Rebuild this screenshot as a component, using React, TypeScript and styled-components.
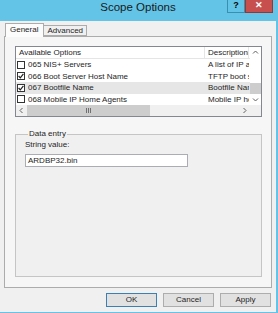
import styled, { createGlobalStyle } from "styled-components";

const GlobalStyle = createGlobalStyle`
  html, body {
    margin: 0;
    padding: 0;
    background: #f0f0f0;
  }
  body {
    font-family: "Liberation Sans", Arial, sans-serif;
    font-size: 8px;
    color: #1e1e1e;
  }
`

const Window = styled.div`
  width: 278px;
  height: 313px;
  box-sizing: border-box;
  display: flex;
  flex-direction: column;
  background: #f0f0f0;
  border-right: 2px solid #63c4e8;
  border-bottom: 1px solid #63c4e8;
  overflow: hidden;
`

const TitleBar = styled.div`
  height: 21px;
  flex: none;
  display: grid;
  grid-template-columns: 49px 1fr 49px;
  align-items: start;
  background: #63c4e8;
`

const Title = styled.div`
  grid-column: 2;
  text-align: center;
  font-size: 11.5px;
  line-height: 14px;
  color: #1a1a1a;
`

const Caption = styled.div`
  grid-column: 3;
  display: flex;
`

const CaptionButton = styled.div<{ close?: boolean }>`
  width: ${p => (p.close ? 28 : 18)}px;
  height: 13px;
  box-sizing: border-box;
  border: 1px solid ${p => (p.close ? '#8e3a3a' : '#3a8fb0')};
  border-top: none;
  background: ${p => (p.close ? '#c7504f' : '#63c4e8')};
  color: ${p => (p.close ? '#fff' : '#000')};
  font-weight: bold;
  font-size: 9px;
  line-height: 11px;
  text-align: center;
`

const Body = styled.div`
  flex: 1;
  display: flex;
  flex-direction: column;
  padding: 1px 4px 0 4px;
`

const TabStrip = styled.div`
  display: flex;
  align-items: flex-end;
  height: 14px;
  padding-left: 1px;
  position: relative;
  z-index: 1;
`

const Tab = styled.div<{ active?: boolean }>`
  box-sizing: border-box;
  height: ${p => (p.active ? 14 : 11)}px;
  padding: ${p => (p.active ? '1px 5px 0 4px' : '0 3px 0 3px')};
  margin-bottom: ${p => (p.active ? -1 : 0)}px;
  border: 1px solid #acacac;
  border-bottom: ${p => (p.active ? 'none' : '1px solid #acacac')};
  border-left: ${p => (p.active ? '1px solid #acacac' : 'none')};
  background: ${p => (p.active ? '#fcfcfc' : '#f0f0f0')};
  line-height: 10px;
`

const TabPanel = styled.div`
  box-sizing: border-box;
  height: 252px;
  border: 1px solid #acacac;
  background: #f6f6f6;
  padding: 9px 9px 0 10px;
  display: flex;
  flex-direction: column;
`

const ListView = styled.div`
  width: 247px;
  height: 71px;
  box-sizing: border-box;
  border: 1px solid #828790;
  background: #fff;
  display: grid;
  grid-template-columns: 1fr 11px;
  grid-template-rows: 58px 11px;
`

const ListBody = styled.div`
  overflow: hidden;
`

const HeaderRow = styled.div`
  display: grid;
  grid-template-columns: 189px 44px;
  height: 12px;
  border-bottom: 1px solid #e5e5e5;
  box-sizing: border-box;
`

const HeaderCell = styled.div`
  padding-left: 3px;
  line-height: 11px;
  white-space: nowrap;
  overflow: hidden;
  border-right: 1px solid #e5e5e5;
`

const Row = styled.div<{ selected?: boolean }>`
  display: grid;
  grid-template-columns: 189px 44px;
  height: 11.5px;
  align-items: center;
  background: ${p => (p.selected ? '#e6e6e6' : 'transparent')};
`

const NameCell = styled.div`
  display: flex;
  align-items: center;
  gap: 3px;
  padding-left: 1px;
  white-space: nowrap;
`

const DescCell = styled.div`
  padding-left: 3px;
  white-space: nowrap;
  overflow: hidden;
`

const Check = styled.span`
  width: 8px;
  height: 8px;
  box-sizing: border-box;
  border: 1px solid #333;
  background: #fff;
  display: inline-flex;
  align-items: center;
  justify-content: center;
`

const VScroll = styled.div`
  grid-row: 1;
  grid-column: 2;
  display: grid;
  grid-template-rows: 11px 12px 12px 12px 11px;
  background: #fff;
`

const Arrow = styled.div<{ row?: number }>`
  display: flex;
  align-items: center;
  justify-content: center;
  ${p => (p.row ? `grid-row: ${p.row};` : '')}
`

const VThumb = styled.div`
  grid-row: 4;
  background: #cdcdcd;
  margin-top: 1px;
`

const HScroll = styled.div`
  grid-row: 2;
  grid-column: 1;
  display: grid;
  grid-template-columns: 11px 123px 1fr 11px;
  background: #f0f0f0;
`

const HThumb = styled.div`
  background: #cdcdcd;
  display: flex;
  align-items: center;
  justify-content: center;
  gap: 1px;
`

const Grip = styled.span`
  width: 1px;
  height: 5px;
  background: #707070;
`

const Corner = styled.div`
  grid-row: 2;
  grid-column: 2;
  background: #f0f0f0;
`

const GroupBox = styled.fieldset`
  width: 247px;
  height: 148px;
  box-sizing: border-box;
  margin: 12px 0 0 0;
  padding: 0 9px;
  border: 1px solid #c5c5c5;
  background: #f0f0f0;
`

const Legend = styled.legend`
  padding: 0 1px;
  margin-left: 3px;
  line-height: 10px;
`

const FieldLabel = styled.div`
  line-height: 10px;
  margin-top: 1px;
`

const TextInput = styled.div`
  width: 163px;
  height: 13px;
  box-sizing: border-box;
  margin-top: 4px;
  border: 1px solid #abadb3;
  background: #fff;
  padding-left: 2px;
  line-height: 11px;
`

const ButtonRow = styled.div`
  display: flex;
  justify-content: flex-end;
  gap: 6px;
  margin-top: 5px;
  padding-right: 1px;
`

const DialogButton = styled.div<{ primary?: boolean }>`
  width: 51px;
  height: 14px;
  box-sizing: border-box;
  border: 1px solid ${p => (p.primary ? '#3c7fb1' : '#adadad')};
  background: #e1e1e1;
  text-align: center;
  line-height: 12px;
`

const CheckMark = () => (
  <svg width="6" height="6" viewBox="0 0 6 6">
    <path d="M0.6 3 L2.3 4.8 L5.4 0.9" fill="none" stroke="#222" strokeWidth="1.2" />
  </svg>
)

// small scroll arrow chevron, dir: up / down / left / right
const Chevron = ({ dir }: { dir: 'up' | 'down' | 'left' | 'right' }) => {
  const d = {
    up: 'M1 4.5 L3.5 2 L6 4.5',
    down: 'M1 2.5 L3.5 5 L6 2.5',
    left: 'M4.5 1 L2 3.5 L4.5 6',
    right: 'M2.5 1 L5 3.5 L2.5 6',
  }[dir]
  return (
    <svg width="7" height="7" viewBox="0 0 7 7">
      <path d={d} fill="none" stroke="#606060" strokeWidth="1" />
    </svg>
  )
}

const options = [
  { name: "065 NIS+ Servers", desc: "A list of IP addresses", checked: false },
  { name: "066 Boot Server Host Name", desc: "TFTP boot server", checked: true },
  { name: "067 Bootfile Name", desc: "Bootfile Name", checked: true, selected: true },
  { name: "068 Mobile IP Home Agents", desc: "Mobile IP home agents", checked: false },
]

const App = () => {
  return (
    <>
      <GlobalStyle />
      <Window>
        <TitleBar>
          <Title>Scope Options</Title>
          <Caption>
            <CaptionButton>?</CaptionButton>
            <CaptionButton close>✕</CaptionButton>
          </Caption>
        </TitleBar>
        <Body>
          <TabStrip>
            <Tab active>General</Tab>
            <Tab>Advanced</Tab>
          </TabStrip>
          <TabPanel>
            <ListView>
              <ListBody>
                <HeaderRow>
                  <HeaderCell>Available Options</HeaderCell>
                  <HeaderCell>Description</HeaderCell>
                </HeaderRow>
                {options.map(o => (
                  <Row key={o.name} selected={o.selected}>
                    <NameCell>
                      <Check>{o.checked && <CheckMark />}</Check>
                      {o.name}
                    </NameCell>
                    <DescCell>{o.desc}</DescCell>
                  </Row>
                ))}
              </ListBody>
              <VScroll>
                <Arrow><Chevron dir="up" /></Arrow>
                <VThumb />
                <Arrow row={5}><Chevron dir="down" /></Arrow>
              </VScroll>
              <HScroll>
                <Arrow><Chevron dir="left" /></Arrow>
                <HThumb><Grip /><Grip /><Grip /></HThumb>
                <div />
                <Arrow><Chevron dir="right" /></Arrow>
              </HScroll>
              <Corner />
            </ListView>
            <GroupBox>
              <Legend>Data entry</Legend>
              <FieldLabel>String value:</FieldLabel>
              <TextInput>ARDBP32.bin</TextInput>
            </GroupBox>
          </TabPanel>
          <ButtonRow>
            <DialogButton primary>OK</DialogButton>
            <DialogButton>Cancel</DialogButton>
            <DialogButton>Apply</DialogButton>
          </ButtonRow>
        </Body>
      </Window>
    </>
  )
}

export default App
